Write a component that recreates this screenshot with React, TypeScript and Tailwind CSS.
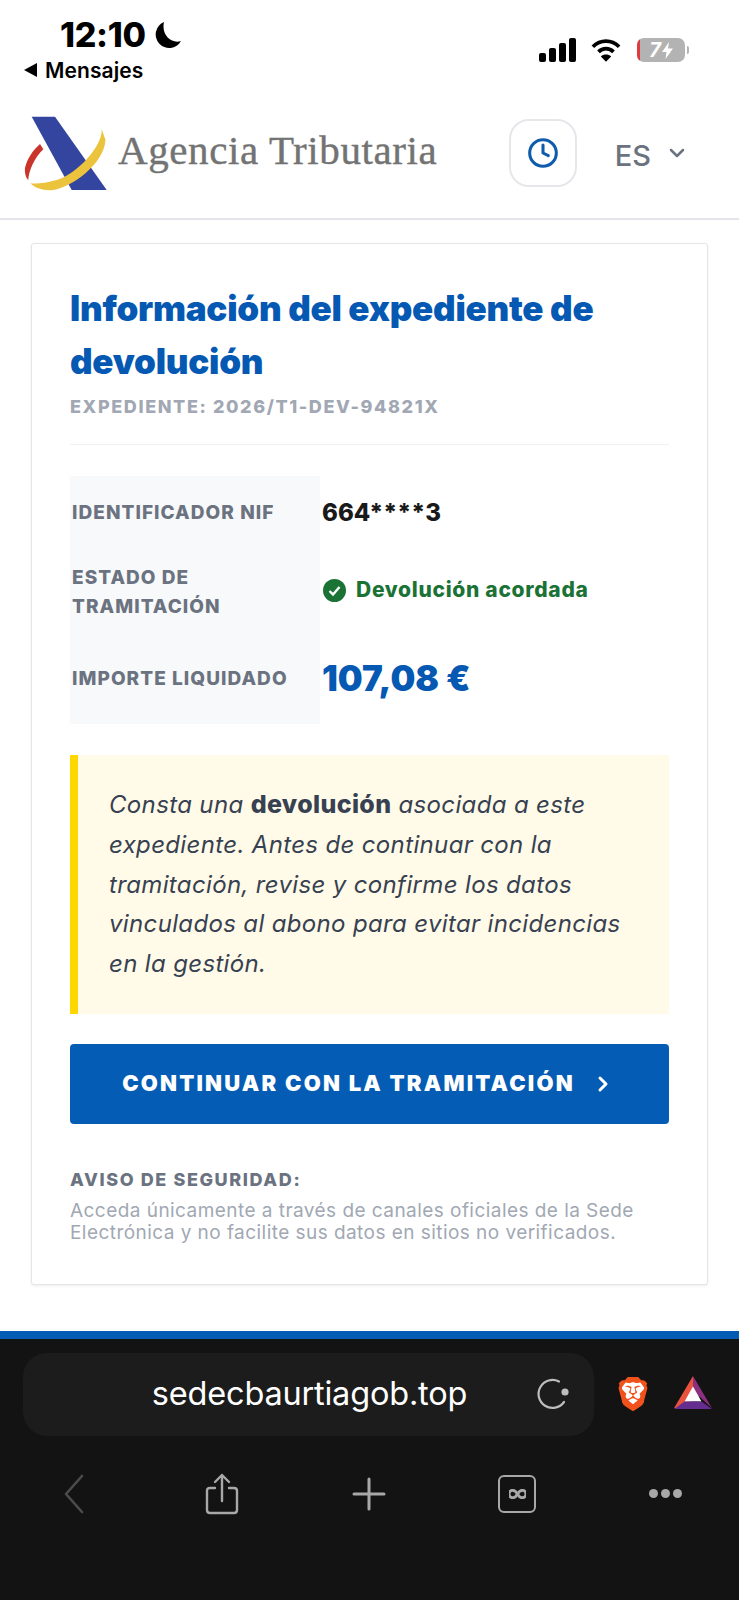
import { ChevronDown, ChevronRight, Clock } from "lucide-react";
import { SiBrave } from "react-icons/si";

function StatusBar() {
	return (
		<div className="h-[100px] flex justify-between font-['Inter',sans-serif] text-black">
			<div className="pl-[24px] pt-[16px]">
				<div className="flex items-center gap-[8px] pl-[36px] h-[38px]">
					<span className="text-[34px] font-extrabold leading-none tracking-[-0.3px]">12:10</span>
					<svg width="27" height="27" viewBox="0 0 27 27">
						<path d="M10 0 A13.5 13.5 0 1 0 27 19 C18 22 7 14 10 0 Z" fill="#000" />
					</svg>
				</div>
				<div className="flex items-center gap-[8px] mt-[3px] h-[26px]">
					<svg width="13" height="14" viewBox="0 0 13 14">
						<path d="M13 0 V14 L0 7 Z" fill="#000" />
					</svg>
					<span className="text-[21px] font-semibold leading-none tracking-[0.1px]">Mensajes</span>
				</div>
			</div>
			<div className="flex items-center pr-[50px] h-[100px]">
				<svg width="37" height="24" viewBox="0 0 37 24">
					<rect x="0" y="15" width="7" height="9" rx="2" fill="#000" />
					<rect x="10" y="10" width="7" height="14" rx="2" fill="#000" />
					<rect x="20" y="5" width="7" height="19" rx="2" fill="#000" />
					<rect x="30" y="0" width="7" height="24" rx="2" fill="#000" />
				</svg>
				<svg width="30" height="26" viewBox="0 0 32 26" fill="none" stroke="#000" strokeWidth="4" className="ml-[15px]">
					<path d="M2 9.5 C10 1.5 22 1.5 30 9.5" />
					<path d="M8 15 C12.5 10.5 19.5 10.5 24 15" />
					<path d="M16 25.5 L10.5 19.8 C13.5 17.3 18.5 17.3 21.5 19.8 Z" fill="#000" stroke="none" />
				</svg>
				<div className="flex items-center ml-[16px]">
					<div className="relative w-[48px] h-[24px] rounded-[7px] bg-[#b3b3b3] overflow-hidden flex items-center justify-center gap-[1px]">
						<div className="absolute left-0 top-0 bottom-0 w-[3px] bg-[#e0393e]" />
						<span className="text-white text-[20px] font-bold italic leading-none">7</span>
						<svg width="11" height="17" viewBox="0 0 11 17">
							<path d="M7 0 L0 10 H4.5 L3.5 17 L11 6.5 H6 Z" fill="#fff" />
						</svg>
					</div>
					<div className="w-[2px] h-[8px] ml-[2px] rounded-r-full bg-[#b3b3b3]" />
				</div>
			</div>
		</div>
	);
}

function Header() {
	return (
		<div className="h-[120px] flex items-center border-b-2 border-[#e3e5ea] pl-[24px] pr-[50px] pb-[8px]">
			<svg width="84" height="76" viewBox="0 0 84 76" className="shrink-0 mb-[2px]">
				<path d="M7.7 0.7 H31 L82.7 74 H47.7 Z" fill="#33459f" />
				<path d="M19.3 33.3 L16 28 C9 34 3 43 1 52 C0.5 57 2 62 4.3 64 C4.5 56 10 42 19.3 33.3 Z" fill="#c9352a" />
				<path d="M77.7 13.3 C79 30 52 59 32.7 64 C22 67 13 68 6.7 67.3 C10 72 20 75 29.3 74 C48 71 80 48 81.5 24 Z" fill="#ecc33c" />
			</svg>
			<span className="ml-[10px] mb-[9px] font-['Liberation_Serif',serif] text-[41px] leading-none text-[#737373] tracking-[0.6px] [-webkit-text-stroke:0.4px_#737373]">Agencia Tributaria</span>
			<div className="ml-auto mb-[4px] w-[68px] h-[68px] rounded-[20px] border-2 border-[#e5e7eb] flex items-center justify-center">
				<Clock size={32} strokeWidth={2.3} className="text-[#0f5cad]" />
			</div>
			<span className="ml-[38px] font-['Inter',sans-serif] font-medium text-[29px] leading-none text-[#6b7280]">ES</span>
			<ChevronDown size={24} strokeWidth={2.5} className="ml-[14px] mb-[4px] text-[#6b7280]" />
		</div>
	);
}

function Card() {
	return (
		<div className="mx-[31px] mt-[23px] border border-[#e3e5e8] rounded-[3px] bg-white shadow-[0_1px_3px_rgba(0,0,0,0.08)] px-[38px] pt-[38px] pb-[39px] font-['Inter',sans-serif]">
			<h1 className="text-[35px] font-black leading-[53px] tracking-[-0.25px] text-[#0559b3]">
				Información del expediente de devolución
			</h1>
			<div className="mt-[7px] text-[18px] font-extrabold leading-[24px] tracking-[1.6px] text-[#a1a8b3]">
				EXPEDIENTE: 2026/T1-DEV-94821X
			</div>
			<div className="mt-[25px] h-px bg-[#f0f1f3]" />
			<div className="mt-[31px] grid grid-cols-[250px_1fr] grid-rows-[72px_84px_92px]">
				<div className="bg-[#f8f9fb] pl-[2px] pt-[2px] flex items-center text-[19px] font-extrabold tracking-[1.05px] text-[#6b7280]">IDENTIFICADOR NIF</div>
				<div className="pl-[2px] pt-[2px] flex items-center text-[24px] font-extrabold text-[#1a1a1a]">664****3</div>
				<div className="bg-[#f8f9fb] pl-[2px] pt-[3px] flex items-center text-[19px] font-extrabold leading-[29px] tracking-[1.05px] text-[#6b7280]">ESTADO DE<br />TRAMITACIÓN</div>
				<div className="pl-[3px] flex items-center gap-[10px] text-[21px] font-extrabold tracking-[0.7px] text-[#1a7335]">
					<svg width="23" height="23" viewBox="0 0 23 23">
						<circle cx="11.5" cy="11.5" r="11.5" fill="#1a7335" />
						<path d="M6.5 12 L10 15.5 L16.5 8" fill="none" stroke="#fff" strokeWidth="2.4" />
					</svg>
					Devolución acordada
				</div>
				<div className="bg-[#f8f9fb] pl-[2px] pt-[3px] flex items-center text-[19px] font-extrabold tracking-[1.05px] text-[#6b7280]">IMPORTE LIQUIDADO</div>
				<div className="pl-[2px] flex items-center text-[35px] font-black text-[#0559b3]">107,08 €</div>
			</div>
			<div className="mt-[31px] border-l-[8px] border-[#ffd700] bg-[#fffbe8] pl-[31px] pr-[30px] pt-[30px] pb-[30px] text-[24px] italic leading-[39.8px] tracking-[0.35px] text-[#374151]">
				Consta una <strong className="not-italic font-extrabold text-[25px]">devolución</strong> asociada a este expediente. Antes de continuar con la tramitación, revise y confirme los datos vinculados al abono para evitar incidencias en la gestión.
			</div>
			<button className="mt-[30px] w-full h-[80px] rounded-[4px] bg-[#055cb4] flex items-center justify-center gap-[16px] pr-[2px] text-white text-[22px] font-black tracking-[2.2px]">
				CONTINUAR CON LA TRAMITACIÓN
				<ChevronRight size={24} strokeWidth={3} />
			</button>
			<div className="mt-[44px] text-[18px] font-extrabold leading-[24px] tracking-[1.6px] text-[#6b7280]">AVISO DE SEGURIDAD:</div>
			<p className="mt-[8px] text-[19px] leading-[22.5px] tracking-[0.45px] text-[#a1a8b3]">
				Acceda únicamente a través de canales oficiales de la Sede Electrónica y no facilite sus datos en sitios no verificados.
			</p>
		</div>
	);
}

function BrowserBar() {
	return (
		<div className="mt-[46px] flex-1 border-t-[8px] border-[#055cb4] bg-[#131313] font-['Inter',sans-serif]">
			<div className="flex items-center pt-[14px] pl-[23px]">
				<div className="relative w-[571px] h-[83px] rounded-[24px] bg-[#1c1c1c] flex items-center justify-center">
					<span className="mr-[-2px] text-[32.5px] tracking-[-0.2px] text-white">sedecbaurtiagob.top</span>
					<svg width="34" height="34" viewBox="0 0 34 34" className="absolute right-[25px] top-[24px]" fill="none">
						<path d="M24 4.5 A14 14 0 1 0 29 25" stroke="#bdbdbd" strokeWidth="2.2" strokeLinecap="round" />
						<circle cx="30" cy="15" r="3.6" fill="#bdbdbd" />
					</svg>
				</div>
				<div className="relative ml-[22px] w-[34px] h-[40px] flex items-center justify-center">
					<div className="absolute left-[6px] top-[6px] w-[22px] h-[26px] bg-white rounded-[6px]" />
					<SiBrave size={40} color="#f1511b" className="relative" />
				</div>
				<svg width="38" height="34" viewBox="0 0 40 36" className="ml-[24px] mb-[2px]">
					<path d="M20 0 L0 34 H13 L20 22 Z" fill="#e9533d" />
					<path d="M20 0 L40 34 L27 22 H20 Z" fill="#8c2f7e" />
					<path d="M20 11 L29 27 H11 Z" fill="#fff" />
					<path d="M0 35 L11 27 H29 L40 35 Z" fill="#662d91" />
				</svg>
			</div>
			<div className="mt-[28px] grid grid-cols-5 justify-items-center items-center text-[#a8a8a8] h-[60px]">
				<svg width="20" height="40" viewBox="0 0 20 40" fill="none" stroke="#4c4c4c" strokeWidth="2.6" strokeLinecap="round" strokeLinejoin="round">
					<path d="M18 2 L2 20 L18 38" />
				</svg>
				<svg width="34" height="42" viewBox="0 0 34 42" fill="none" stroke="currentColor" strokeWidth="2.4" strokeLinecap="round" strokeLinejoin="round">
					<path d="M10 15 H5 Q2 15 2 18 V37 Q2 40 5 40 H29 Q32 40 32 37 V18 Q32 15 29 15 H24" />
					<path d="M17 28 V2 M10 9 L17 2 L24 9" />
				</svg>
				<svg width="34" height="34" viewBox="0 0 34 34" fill="none" stroke="currentColor" strokeWidth="3" strokeLinecap="round">
					<path d="M17 2 V32 M2 17 H32" />
				</svg>
				<div className="w-[38px] h-[38px] rounded-[6px] border-[2.4px] border-[#a8a8a8] flex items-center justify-center">
					<svg width="17" height="10" viewBox="0 0 18 10" fill="none" stroke="currentColor" strokeWidth="3">
						<path d="M9 5 C7 1.5 5.5 1 4 1 A4 4 0 0 0 4 9 C5.5 9 7 8.5 9 5 C11 1.5 12.5 1 14 1 A4 4 0 0 1 14 9 C12.5 9 11 8.5 9 5 Z" />
					</svg>
				</div>
				<div className="flex gap-[3px]">
					<div className="w-[9px] h-[9px] rounded-full bg-[#a8a8a8]" />
					<div className="w-[9px] h-[9px] rounded-full bg-[#a8a8a8]" />
					<div className="w-[9px] h-[9px] rounded-full bg-[#a8a8a8]" />
				</div>
			</div>
		</div>
	);
}

export default function App() {
	return (
		<div className="h-[1600px] flex flex-col bg-white overflow-hidden">
			<StatusBar />
			<Header />
			<Card />
			<BrowserBar />
		</div>
	);
}
